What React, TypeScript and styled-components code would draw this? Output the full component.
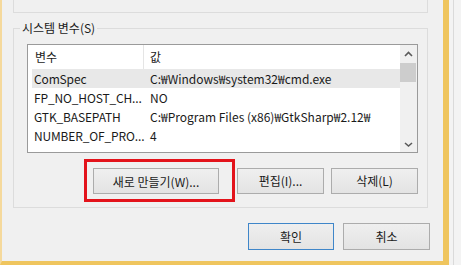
import React from "react";
import styled, { createGlobalStyle } from "styled-components";

const Global = createGlobalStyle`
  html, body { margin: 0; padding: 0; background: #f0f0f0; overflow: hidden; }
  body {
    font-family: "Noto Sans CJK KR", "Noto Sans", sans-serif;
    font-size: 12px;
    color: #1a1a1a;
  }
`;

const Screen = styled.div`
  width: 461px;
  height: 265px;
  display: flex;
  overflow: hidden;
  background: #f0f0f0;
`;

const Window = styled.div`
  width: 449px;
  height: 265px;
  flex: none;
  box-sizing: border-box;
  border-left: 2px solid #f5d99c;
  border-right: 6px solid #efc55e;
  border-bottom: 4px solid #efc55e;
  background: #f0f0f0;
  padding: 0 15px 0 11px;
  display: flex;
  flex-direction: column;
`;

const SideStrip = styled.div`
  flex: 1;
  padding-left: 4px;
  background: #f3f3f3;
`;

const SideLine = styled.div`
  height: 100%;
  border-left: 1px solid #dadada;
`;

const TopGroup = styled.div`
  height: 13px;
  box-sizing: border-box;
  border: 1px solid #dcdcdc;
  border-top: none;
`;

const Group = styled.fieldset`
  margin: 7px 0 0;
  padding: 8px 9px 5px 13px;
  border: 1px solid #dcdcdc;
  min-width: 0;
`;

const Legend = styled.legend`
  margin-left: -7px;
  padding: 0 2px;
  line-height: 16px;
  font-size: 12px;
`;

const ListView = styled.div`
  height: 109px;
  box-sizing: border-box;
  border: 1px solid #9a9a9a;
  background: #ffffff;
  display: flex;
`;

const ListBody = styled.div`
  flex: 1;
  display: flex;
  flex-direction: column;
  overflow: hidden;
`;

const HeaderRow = styled.div`
  height: 24px;
  display: flex;
  flex: none;
`;

const HeaderCell = styled.div<{ $w?: number; $pad: number; $sep?: boolean }>`
  ${(p) => (p.$w ? `width: ${p.$w}px; flex: none;` : "flex: 1;")}
  box-sizing: border-box;
  padding-left: ${(p) => p.$pad}px;
  line-height: 24px;
  border-right: ${(p) => (p.$sep ? "1px solid #e5e5e5" : "none")};
  white-space: nowrap;
`;

const Row = styled.div<{ $selected?: boolean }>`
  height: 19px;
  flex: none;
  margin-left: 4px;
  display: flex;
  background: ${(p) => (p.$selected ? "#e8e8e8" : "transparent")};
`;

const Cell = styled.div<{ $w?: number; $pad: number }>`
  ${(p) => (p.$w ? `width: ${p.$w}px; flex: none;` : "flex: 1; overflow: hidden;")}
  box-sizing: border-box;
  padding-left: ${(p) => p.$pad}px;
  line-height: 19px;
  white-space: nowrap;
  letter-spacing: ${(p) => (p.$w ? "-0.15px" : "0")};
`;

const ScrollBar = styled.div`
  width: 17px;
  flex: none;
  background: #f0f0f0;
  display: flex;
  flex-direction: column;
`;

const ArrowBox = styled.div`
  height: 17px;
  flex: none;
  display: flex;
  align-items: center;
  justify-content: center;
`;

const Thumb = styled.div`
  height: 19px;
  margin: 1px 1px 0 0;
  background: #cdcdcd;
`;

const Spacer = styled.div`
  flex: 1;
`;

const ButtonRow = styled.div`
  margin-top: 6px;
  display: flex;
  justify-content: flex-end;
  align-items: center;
  gap: 7px;
`;

const Highlight = styled.div`
  border: 3px solid #e3131b;
  padding: 6px 13px 5px 6px;
  margin-right: -5px;
  display: flex;
`;

const Button = styled.button<{ $w: number; $h?: number; $primary?: boolean }>`
  width: ${(p) => p.$w}px;
  height: ${(p) => p.$h ?? 26}px;
  box-sizing: border-box;
  padding: 0;
  border: 1px solid ${(p) => (p.$primary ? "#3f86c9" : "#acacac")};
  background: linear-gradient(#efefef, #e3e3e3);
  font-family: "Noto Sans CJK KR", "Noto Sans", sans-serif;
  font-size: 12px;
  color: #1a1a1a;
  white-space: nowrap;
`;

const Actions = styled.div`
  margin-top: 15px;
  margin-right: -2px;
  display: flex;
  justify-content: flex-end;
  gap: 9px;
`;

const Chevron = ({ down }: { down?: boolean }) => (
  <svg width="17" height="17" viewBox="0 0 17 17">
    <path
      d={down ? "M5 8 L8.5 11 L12 8" : "M5 11 L8.5 7.5 L12 11"}
      fill="none"
      stroke="#5a5a5a"
      strokeWidth="1.6"
    />
  </svg>
);

const rows = [
  { name: "ComSpec", value: "C:₩Windows₩system32₩cmd.exe", selected: true },
  { name: "FP_NO_HOST_CH...", value: "NO" },
  { name: "GTK_BASEPATH", value: "C:₩Program Files (x86)₩GtkSharp₩2.12₩" },
  { name: "NUMBER_OF_PRO...", value: "4" },
];

export default function App() {
  return (
    <>
      <Global />
      <Screen>
        <Window>
          <TopGroup />
          <Group>
            <Legend>시스템 변수(S)</Legend>
            <ListView>
              <ListBody>
                <HeaderRow>
                  <HeaderCell $w={116} $pad={7} $sep>
                    변수
                  </HeaderCell>
                  <HeaderCell $pad={6}>값</HeaderCell>
                </HeaderRow>
                {rows.map((r) => (
                  <Row key={r.name} $selected={r.selected}>
                    <Cell $w={112} $pad={2}>
                      {r.name}
                    </Cell>
                    <Cell $pad={6}>{r.value}</Cell>
                  </Row>
                ))}
              </ListBody>
              <ScrollBar>
                <ArrowBox>
                  <Chevron />
                </ArrowBox>
                <Thumb />
                <Spacer />
                <ArrowBox>
                  <Chevron down />
                </ArrowBox>
              </ScrollBar>
            </ListView>
            <ButtonRow>
              <Highlight>
                <Button $w={126}>새로 만들기(W)...</Button>
              </Highlight>
              <Button $w={87}>편집(I)...</Button>
              <Button $w={87}>삭제(L)</Button>
            </ButtonRow>
          </Group>
          <Actions>
            <Button $w={86} $h={27} $primary>
              확인
            </Button>
            <Button $w={87} $h={27}>
              취소
            </Button>
          </Actions>
        </Window>
        <SideStrip>
          <SideLine />
        </SideStrip>
      </Screen>
    </>
  );
}
